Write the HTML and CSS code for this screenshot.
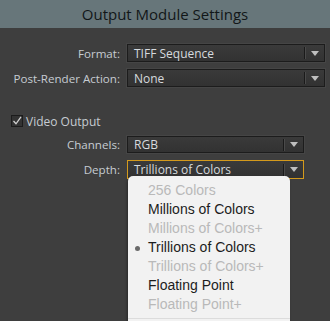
FILE: index.html
```html
<!DOCTYPE html>
<html>
<head>
<meta charset="utf-8">
<link rel="stylesheet" href="styles.css">
</head>
<body>
<div class="title">Output Module Settings</div>
<div class="form">
  <div class="row r-format">
    <div class="label">Format:</div>
    <div class="select wide"><span class="val">TIFF Sequence</span><span class="div"></span><span class="arrow"></span></div>
  </div>
  <div class="row r-post">
    <div class="label">Post-Render Action:</div>
    <div class="select wide"><span class="val">None</span><span class="div"></span><span class="arrow"></span></div>
  </div>
  <div class="check-row">
    <span class="checkbox"><svg width="12" height="12" viewBox="0 0 12 12"><path d="M2.5 6 L5 8.8 L10 1.8" fill="none" stroke="#d0d0d0" stroke-width="1.3"/></svg></span>
    <span class="check-label">Video Output</span>
  </div>
  <div class="row r-chan">
    <div class="label">Channels:</div>
    <div class="select narrow"><span class="val">RGB</span><span class="div"></span><span class="arrow"></span></div>
  </div>
  <div class="row r-depth">
    <div class="label">Depth:</div>
    <div class="select narrow focus"><span class="val">Trillions of Colors</span><span class="div"></span><span class="arrow"></span></div>
  </div>
</div>
<div class="menu">
  <div class="item dis">256 Colors</div>
  <div class="item">Millions of Colors</div>
  <div class="item dis">Millions of Colors+</div>
  <div class="item sel">Trillions of Colors</div>
  <div class="item dis">Trillions of Colors+</div>
  <div class="item">Floating Point</div>
  <div class="item dis">Floating Point+</div>
  <div class="sep"></div>
</div>
</body>
</html>
```
FILE: styles.css
```css
html, body {
  margin: 0;
  padding: 0;
}
body {
  width: 330px;
  height: 321px;
  overflow: hidden;
  background: #3e3e3e;
  position: relative;
  font-family: "Open Sans", "Liberation Sans", sans-serif;
}
.title {
  height: 28px;
  background: #67767a;
  color: #121618;
  font-size: 15px;
  line-height: 29px;
  text-align: center;
}
.form {
  padding-top: 16px;
}
.row {
  display: flex;
  align-items: center;
  height: 18px;
}
.r-post { margin-top: 7px; }
.r-chan { margin-top: 9px; height: 17px; }
.r-depth { margin-top: 7px; height: 19px; }
.label {
  width: 120px;
  text-align: right;
  color: #c6ccd2;
  font-size: 11.6px;
  margin-right: 7px;
  white-space: nowrap;
}
.select {
  box-sizing: border-box;
  height: 100%;
  border: 1px solid #1c1c1c;
  box-shadow: 0 0 0 1px #454545;
  background: linear-gradient(#3a3a3a, #323232);
  display: flex;
  align-items: center;
  color: #d6dade;
  font-size: 12px;
  position: relative;
}
.select.wide { width: 198px; }
.select.narrow { width: 177px; }
.select.focus {
  border: 1px solid #d49a1c;
  box-shadow: none;
}
.val {
  flex: 1;
  padding-left: 6px;
  white-space: nowrap;
}
.div {
  width: 1px;
  height: 12px;
  background: #1a1a1a;
  box-shadow: 1px 0 0 #4a4a4a;
  margin-right: 6px;
}
.arrow {
  width: 0;
  height: 0;
  border-left: 4px solid transparent;
  border-right: 4px solid transparent;
  border-top: 5px solid #bfbfbf;
  margin-right: 5px;
}
.check-row {
  display: flex;
  align-items: center;
  margin-top: 28px;
  padding-left: 11px;
  height: 12px;
}
.checkbox {
  box-sizing: border-box;
  width: 12px;
  height: 12px;
  border: 1px solid #1c1c1c;
  background: #333;
  display: flex;
  position: relative;
}
.checkbox svg {
  position: absolute;
  left: -1px;
  top: -1px;
}
.check-label {
  margin-left: 3px;
  color: #c6ccd2;
  font-size: 12px;
}
.menu {
  position: absolute;
  left: 128px;
  top: 176px;
  width: 162px;
  height: 160px;
  background: #f2f2f2;
  border-radius: 5px 5px 0 0;
  box-shadow: -1px 2px 3px rgba(0,0,0,0.35);
  padding-top: 5px;
  box-sizing: border-box;
  font-family: "Liberation Sans", Arial, sans-serif;
}
.item {
  height: 19px;
  line-height: 19px;
  padding-left: 20px;
  font-size: 14px;
  color: #1c1c1c;
  position: relative;
  white-space: nowrap;
}
.item.dis { color: #b9b9b9; }
.item.sel::before {
  content: "";
  position: absolute;
  left: 7px;
  top: 8px;
  width: 5px;
  height: 5px;
  border-radius: 50%;
  background: #6a6a6a;
}
.sep {
  margin-top: 4px;
  height: 1px;
  background: #dcdcdc;
}
```
